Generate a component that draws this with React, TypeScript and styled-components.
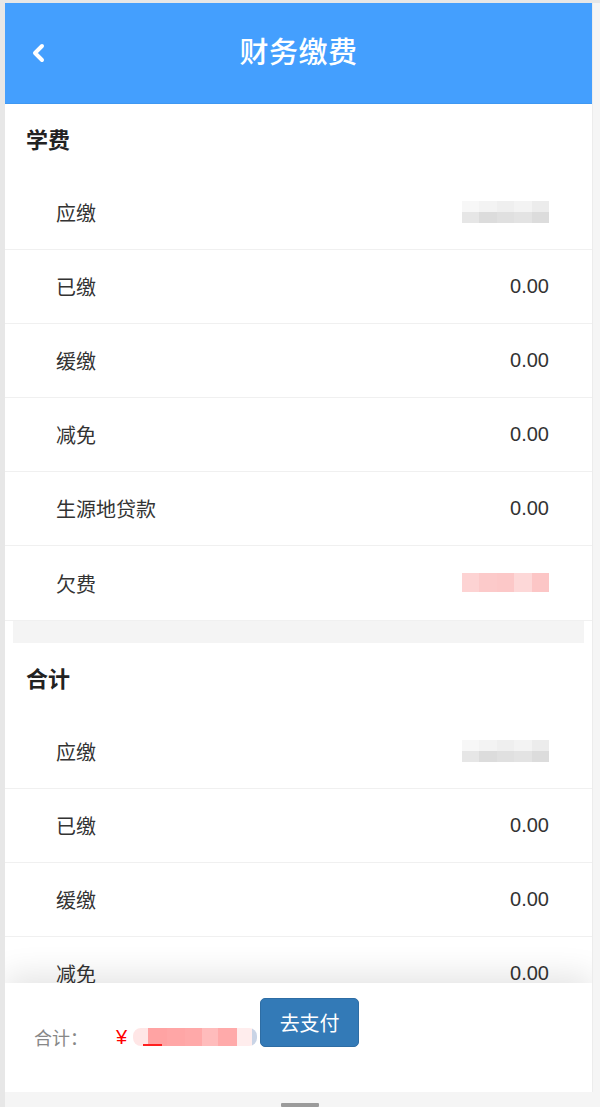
import React from "react";
import styled, { createGlobalStyle } from "styled-components";

const GlobalStyle = createGlobalStyle`
  html, body {
    margin: 0;
    padding: 0;
    background: #f5f5f5;
  }
  * {
    box-sizing: border-box;
  }
  body {
    font-family: "Liberation Sans", "Noto Sans CJK SC", sans-serif;
    color: #333;
  }
`;

type Item = { label: string; value?: string; blur?: string[][] };

const GRAY_BLUR = [
  ["#f7f7f7", "#f3f3f3", "#efefef", "#f3f3f3", "#ececec"],
  ["#e6e6e6", "#dcdcdc", "#e0e0e0", "#e3e3e3", "#dcdcdc"],
];
const PINK_BLUR = [["#fdd3d3", "#fccaca", "#fcc8c8", "#fdd8d8", "#fcc6c6"]];

const sections: { title: string; items: Item[] }[] = [
  {
    title: "学费",
    items: [
      { label: "应缴", blur: GRAY_BLUR },
      { label: "已缴", value: "0.00" },
      { label: "缓缴", value: "0.00" },
      { label: "减免", value: "0.00" },
      { label: "生源地贷款", value: "0.00" },
      { label: "欠费", blur: PINK_BLUR },
    ],
  },
  {
    title: "合计",
    items: [
      { label: "应缴", blur: GRAY_BLUR },
      { label: "已缴", value: "0.00" },
      { label: "缓缴", value: "0.00" },
      { label: "减免", value: "0.00" },
      { label: "生源地贷款", value: "0.00" },
      { label: "欠费", blur: PINK_BLUR },
    ],
  },
];

const AMOUNT_CELLS = [
  { w: 15, c: "#ffe6e6" },
  { w: 19, c: "#ffa3a3" },
  { w: 18, c: "#ffa6a6" },
  { w: 17, c: "#ffa9a9" },
  { w: 16, c: "#ffbcbc" },
  { w: 19, c: "#ffaaaa" },
  { w: 15, c: "#ffeded" },
  { w: 5, c: "#c9d4e6" },
];

export default function App() {
  return (
    <>
      <GlobalStyle />
      <Page>
        <Screen>
          <Header>
            <BackButton aria-label="返回">
              <svg width="16" height="20" viewBox="0 0 16 20">
                <polyline
                  points="11,3 4,10 11,17"
                  fill="none"
                  stroke="#fff"
                  strokeWidth="4"
                  strokeLinecap="round"
                  strokeLinejoin="round"
                />
              </svg>
            </BackButton>
            <HeaderTitle>财务缴费</HeaderTitle>
            <span />
          </Header>

          <Content>
            {sections.map((section, i) => (
              <React.Fragment key={section.title}>
                {i > 0 && <Gap />}
                <Section>
                  <SectionTitle>{section.title}</SectionTitle>
                  {section.items.map((item) => (
                    <Row key={item.label}>
                      <RowLabel>{item.label}</RowLabel>
                      {item.blur ? (
                        <Mosaic>
                          {item.blur.map((line, li) => (
                            <MosaicLine key={li}>
                              {line.map((c, ci) => (
                                <MosaicCell key={ci} style={{ background: c }} />
                              ))}
                            </MosaicLine>
                          ))}
                        </Mosaic>
                      ) : (
                        <RowValue>{item.value}</RowValue>
                      )}
                    </Row>
                  ))}
                </Section>
              </React.Fragment>
            ))}
          </Content>

          <Footer>
            <Summary>
              <SummaryLabel>合计：</SummaryLabel>
              <Yen>¥</Yen>
              <Amount>
                {AMOUNT_CELLS.map((cell, i) => (
                  <AmountCell key={i} style={{ width: cell.w, background: cell.c }} />
                ))}
                <AmountUnderline />
              </Amount>
            </Summary>
            <PayButton type="button">去支付</PayButton>
          </Footer>
        </Screen>
        <HomeBar>
          <Indicator />
        </HomeBar>
      </Page>
    </>
  );
}

const Page = styled.div`
  height: 1107px;
  border-top: 3px solid #e7e7e7;
  border-left: 5px solid #e7e7e7;
  display: flex;
  flex-direction: column;
  overflow: hidden;
`;

const Screen = styled.div`
  width: 588px;
  height: 1089px;
  background: #fff;
  border-right: 1px solid #ececec;
  display: flex;
  flex-direction: column;
  overflow: hidden;
`;

const Header = styled.header`
  flex: 0 0 101px;
  background: #449ffe;
  border-bottom: 1px solid #3f98f2;
  display: grid;
  grid-template-columns: 90px 1fr 90px;
  align-items: center;
`;

const BackButton = styled.button`
  border: 0;
  background: none;
  padding: 0 0 0 26px;
  height: 40px;
  display: flex;
  align-items: center;
  cursor: pointer;
`;

const HeaderTitle = styled.h1`
  margin: 0;
  text-align: center;
  color: #fff;
  font-size: 29px;
  font-weight: 500;
  line-height: 40px;
  letter-spacing: 0.5px;
`;

const Content = styled.main`
  flex: 1;
  min-height: 0;
  overflow: hidden;
`;

const Section = styled.section`
  border-bottom: 1px solid #f0f0f0;
`;

const SectionTitle = styled.h2`
  margin: 0;
  height: 72px;
  padding: 0 0 4px 21px;
  display: flex;
  align-items: center;
  font-size: 22px;
  font-weight: 700;
  color: #222;
`;

const Row = styled.div`
  height: 74px;
  padding: 0 43px 0 51px;
  display: flex;
  align-items: center;
  justify-content: space-between;
  border-bottom: 1px solid #f0f0f0;

  &:last-child {
    border-bottom: 0;
  }
`;

const RowLabel = styled.span`
  font-size: 20px;
  color: #333;
`;

const RowValue = styled.span`
  font-size: 20px;
  color: #333;
`;

const Mosaic = styled.div`
  display: flex;
  flex-direction: column;
  margin-top: -2px;
`;

const MosaicLine = styled.div`
  display: flex;
  height: 11px;

  &:only-child {
    height: 19px;
  }
`;

const MosaicCell = styled.span`
  width: 17.4px;
`;

const Gap = styled.div`
  height: 22px;
  margin: 0 8px;
  background: #f4f4f4;
`;

const Footer = styled.footer`
  flex: 0 0 109px;
  position: relative;
  z-index: 1;
  background: #fff;
  box-shadow: 0 -8px 30px rgba(0, 0, 0, 0.11);
  padding: 15px 0 0 29px;
  display: flex;
  align-items: flex-start;
`;

const Summary = styled.div`
  margin-top: 27px;
  height: 24px;
  display: flex;
  align-items: center;
`;

const SummaryLabel = styled.span`
  font-size: 18px;
  color: #888;
`;

const Yen = styled.span`
  margin-left: 28px;
  font-size: 20px;
  color: #ff0000;
`;

const Amount = styled.div`
  position: relative;
  margin-left: 6px;
  height: 18px;
  display: flex;
  border-radius: 8px;
  overflow: hidden;
`;

const AmountCell = styled.span`
  height: 100%;
`;

const AmountUnderline = styled.span`
  position: absolute;
  left: 10px;
  bottom: 0;
  width: 19px;
  height: 2px;
  background: #ff2020;
`;

const PayButton = styled.button`
  margin-left: 3px;
  width: 99px;
  height: 49px;
  border: 1px solid #2e6da4;
  border-radius: 5px;
  background: #337ab7;
  color: #fff;
  font-family: inherit;
  font-size: 20px;
  cursor: pointer;
`;

const HomeBar = styled.div`
  flex: 1;
  display: flex;
  justify-content: center;
  align-items: flex-end;
  margin-left: -5px;
`;

const Indicator = styled.span`
  width: 38px;
  height: 4px;
  background: #9b9b9b;
  border-radius: 1px;
`;
